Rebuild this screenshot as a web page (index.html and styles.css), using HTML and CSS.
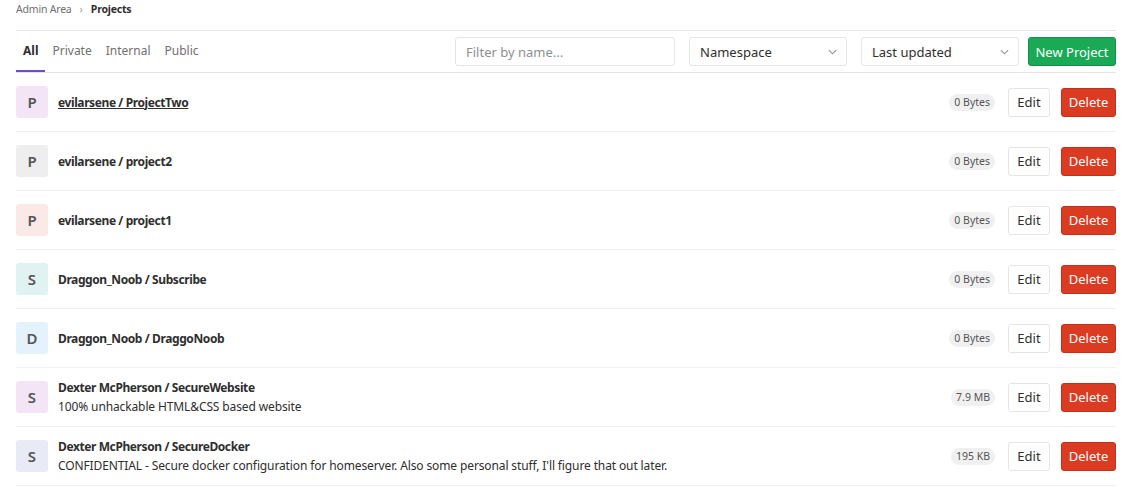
FILE: index.html
```html
<!DOCTYPE html>
<html>
<head>
<meta charset="utf-8">
<link rel="stylesheet" href="styles.css">
</head>
<body>
<div class="page">
  <div class="breadcrumb">
    <span class="crumb">Admin Area</span>
    <span class="sep">›</span>
    <span class="crumb current">Projects</span>
  </div>
  <div class="toolbar">
    <ul class="tabs">
      <li class="tab active">All</li>
      <li class="tab">Private</li>
      <li class="tab">Internal</li>
      <li class="tab">Public</li>
    </ul>
    <div class="controls">
      <div class="input filter">Filter by name...</div>
      <div class="input select ns">Namespace<svg class="chev" viewBox="0 0 10 6" width="9" height="6"><path d="M1 1l4 4 4-4" fill="none" stroke="#8f8f8f" stroke-width="1.2"/></svg></div>
      <div class="input select sort">Last updated<svg class="chev" viewBox="0 0 10 6" width="9" height="6"><path d="M1 1l4 4 4-4" fill="none" stroke="#8f8f8f" stroke-width="1.2"/></svg></div>
      <div class="btn btn-new">New Project</div>
    </div>
  </div>
  <ul class="projects">
    <li class="row">
      <div class="avatar c1">P</div>
      <div class="info"><div class="name underline">evilarsene / ProjectTwo</div></div>
      <span class="size">0 Bytes</span>
      <div class="btn btn-edit">Edit</div>
      <div class="btn btn-del">Delete</div>
    </li>
    <li class="row">
      <div class="avatar c2">P</div>
      <div class="info"><div class="name">evilarsene / project2</div></div>
      <span class="size">0 Bytes</span>
      <div class="btn btn-edit">Edit</div>
      <div class="btn btn-del">Delete</div>
    </li>
    <li class="row">
      <div class="avatar c3">P</div>
      <div class="info"><div class="name">evilarsene / project1</div></div>
      <span class="size">0 Bytes</span>
      <div class="btn btn-edit">Edit</div>
      <div class="btn btn-del">Delete</div>
    </li>
    <li class="row">
      <div class="avatar c4">S</div>
      <div class="info"><div class="name">Draggon_Noob / Subscribe</div></div>
      <span class="size">0 Bytes</span>
      <div class="btn btn-edit">Edit</div>
      <div class="btn btn-del">Delete</div>
    </li>
    <li class="row">
      <div class="avatar c5">D</div>
      <div class="info"><div class="name">Draggon_Noob / DraggoNoob</div></div>
      <span class="size">0 Bytes</span>
      <div class="btn btn-edit">Edit</div>
      <div class="btn btn-del">Delete</div>
    </li>
    <li class="row">
      <div class="avatar c6">S</div>
      <div class="info"><div class="name">Dexter McPherson / SecureWebsite</div><div class="desc">100% unhackable HTML&amp;CSS based website</div></div>
      <span class="size">7.9 MB</span>
      <div class="btn btn-edit">Edit</div>
      <div class="btn btn-del">Delete</div>
    </li>
    <li class="row">
      <div class="avatar c7">S</div>
      <div class="info"><div class="name">Dexter McPherson / SecureDocker</div><div class="desc">CONFIDENTIAL - Secure docker configuration for homeserver. Also some personal stuff, I'll figure that out later.</div></div>
      <span class="size">195 KB</span>
      <div class="btn btn-edit">Edit</div>
      <div class="btn btn-del">Delete</div>
    </li>
  </ul>
</div>
</body>
</html>
```

FILE: styles.css
```css
* { box-sizing: border-box; }
html, body { margin: 0; padding: 0; background: #fff; }
body {
  font-family: "Noto Sans", "DejaVu Sans", sans-serif;
  color: #2e2e2e;
  font-size: 13px;
}
.page { padding: 0 25px 0 16px; }
.breadcrumb {
  height: 31px;
  display: flex;
  align-items: flex-start;
  gap: 8px;
  padding-top: 2px;
  font-size: 10.5px;
  line-height: 14px;
  color: #707070;
  border-bottom: 1px solid #e5e5e5;
}
.breadcrumb .crumb { letter-spacing: -0.2px; }
.breadcrumb .sep { color: #a0a0a0; }
.breadcrumb .current { color: #2e2e2e; font-weight: 700; }
.toolbar {
  display: flex;
  align-items: stretch;
  justify-content: space-between;
  border-bottom: 1px solid #e5e5e5;
  height: 42px;
}
.tabs { list-style: none; margin: 0; padding: 0; display: flex; }
.tab {
  padding: 10px 7px 0;
  color: #707070;
  font-size: 12px;
  line-height: 20px;
}
.tab.active {
  color: #2e2e2e;
  font-weight: 700;
  box-shadow: inset 0 -2px 0 #6b4fbb;
}
.controls { display: flex; align-items: center; gap: 14px; }
.input {
  height: 29px;
  border: 1px solid #e5e5e5;
  border-radius: 3px;
  display: flex;
  align-items: center;
  padding: 0 10px;
  font-size: 13px;
  color: #2e2e2e;
}
.filter { width: 220px; color: #8f8f8f; }
.select { justify-content: space-between; padding-right: 9px; }
.ns { width: 158px; }
.sort { width: 158px; margin-right: -5px; }
.btn {
  height: 29px;
  border-radius: 3px;
  display: flex;
  align-items: center;
  justify-content: center;
  font-size: 13px;
  padding: 0 6px;
  white-space: nowrap;
}
.btn-new { background: #1aaa55; color: #fff; width: 88px; border: 1px solid #168f48; }
.projects { list-style: none; margin: 0; padding: 0; }
.row {
  display: flex;
  align-items: center;
  padding: 13px 0;
  border-bottom: 1px solid #f0f0f0;
  height: 59px;
}
.avatar {
  width: 32px; height: 32px;
  border-radius: 3px;
  display: flex; align-items: center; justify-content: center;
  font-size: 15px;
  font-weight: 600;
  color: #555;
  margin-right: 10px;
  flex: none;
}
.c1 { background: #f3e5f5; }
.c2 { background: #eeeeee; }
.c3 { background: #fbe9e7; }
.c4 { background: #e0f2f1; }
.c5 { background: #e3f2fd; }
.c6 { background: #f3e5f5; }
.c7 { background: #e8eaf6; }
.info { flex: 1; min-width: 0; }
.name { font-weight: 700; font-size: 12px; letter-spacing: -0.4px; color: #2e2e2e; line-height: 19px; }
.name.underline { text-decoration: underline; }
.desc { font-size: 12px; letter-spacing: -0.12px; color: #2e2e2e; line-height: 19px; }
.size {
  background: #f0f0f0;
  color: #555;
  font-size: 10.5px;
  border-radius: 9px;
  padding: 0 5px;
  line-height: 17px;
  margin-right: 13px;
}
.btn-edit {
  background: #fff;
  border: 1px solid #e5e5e5;
  color: #2e2e2e;
  width: 42px;
  margin-right: 11px;
}
.btn-del {
  background: #db3b21;
  border: 1px solid #c0341d;
  color: #fff;
  width: 55px;
}
```
